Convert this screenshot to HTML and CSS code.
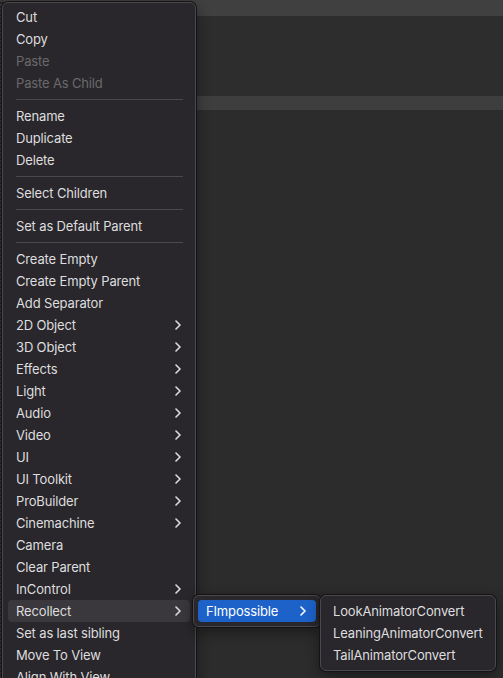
FILE: index.html
```html
<!DOCTYPE html>
<html>
<head>
<meta charset="utf-8">
<link rel="stylesheet" href="styles.css">
</head>
<body>
<div class="app">
  <div class="edge"></div>
  <div class="panel">
    <div class="bar-top"></div>
    <div class="area"></div>
    <div class="bar-mid"></div>
    <div class="area rest"></div>
  </div>
</div>

<div class="menu main">
  <div class="item">Cut</div>
  <div class="item">Copy</div>
  <div class="item disabled">Paste</div>
  <div class="item disabled">Paste As Child</div>
  <div class="sep"></div>
  <div class="item">Rename</div>
  <div class="item">Duplicate</div>
  <div class="item">Delete</div>
  <div class="sep"></div>
  <div class="item">Select Children</div>
  <div class="sep"></div>
  <div class="item">Set as Default Parent</div>
  <div class="sep"></div>
  <div class="item">Create Empty</div>
  <div class="item">Create Empty Parent</div>
  <div class="item">Add Separator</div>
  <div class="item sub">2D Object<svg class="chev" viewBox="0 0 6 10"><path d="M1 1 L5 5 L1 9"/></svg></div>
  <div class="item sub">3D Object<svg class="chev" viewBox="0 0 6 10"><path d="M1 1 L5 5 L1 9"/></svg></div>
  <div class="item sub">Effects<svg class="chev" viewBox="0 0 6 10"><path d="M1 1 L5 5 L1 9"/></svg></div>
  <div class="item sub">Light<svg class="chev" viewBox="0 0 6 10"><path d="M1 1 L5 5 L1 9"/></svg></div>
  <div class="item sub">Audio<svg class="chev" viewBox="0 0 6 10"><path d="M1 1 L5 5 L1 9"/></svg></div>
  <div class="item sub">Video<svg class="chev" viewBox="0 0 6 10"><path d="M1 1 L5 5 L1 9"/></svg></div>
  <div class="item sub">UI<svg class="chev" viewBox="0 0 6 10"><path d="M1 1 L5 5 L1 9"/></svg></div>
  <div class="item sub">UI Toolkit<svg class="chev" viewBox="0 0 6 10"><path d="M1 1 L5 5 L1 9"/></svg></div>
  <div class="item sub">ProBuilder<svg class="chev" viewBox="0 0 6 10"><path d="M1 1 L5 5 L1 9"/></svg></div>
  <div class="item sub">Cinemachine<svg class="chev" viewBox="0 0 6 10"><path d="M1 1 L5 5 L1 9"/></svg></div>
  <div class="item">Camera</div>
  <div class="item">Clear Parent</div>
  <div class="item sub">InControl<svg class="chev" viewBox="0 0 6 10"><path d="M1 1 L5 5 L1 9"/></svg></div>
  <div class="item sub open">Recollect<svg class="chev" viewBox="0 0 6 10"><path d="M1 1 L5 5 L1 9"/></svg></div>
  <div class="item">Set as last sibling</div>
  <div class="item">Move To View</div>
  <div class="item">Align With View</div>
</div>

<div class="menu sub1">
  <div class="item sub active">FImpossible<svg class="chev" viewBox="0 0 6 10"><path d="M1 1 L5 5 L1 9"/></svg></div>
</div>

<div class="menu sub2">
  <div class="item">LookAnimatorConvert</div>
  <div class="item">LeaningAnimatorConvert</div>
  <div class="item">TailAnimatorConvert</div>
</div>
</body>
</html>
```
FILE: styles.css
```css
* { box-sizing: border-box; }
html, body {
  margin: 0;
  padding: 0;
  width: 503px;
  height: 678px;
  overflow: hidden;
  background: #2c2c2c;
  font-family: "Inter", "Noto Sans", sans-serif;
}
.app {
  display: flex;
  height: 678px;
}
.edge {
  width: 4px;
  background: repeating-linear-gradient(to bottom, #3a3a3a 0 2px, #262626 2px 4px);
}
.panel {
  flex: 1;
  display: flex;
  flex-direction: column;
}
.bar-top {
  height: 16px;
  background: #404040;
}
.area {
  height: 80px;
  background: #2d2d2d;
}
.bar-mid {
  height: 14px;
  background: #3e3e3e;
}
.area.rest {
  flex: 1;
  background: #2c2c2c;
}

.menu {
  position: absolute;
  background: #29272b;
  border: 1px solid #4a484c;
  box-shadow: 0 0 0 1px #141414, 0 4px 14px rgba(0,0,0,0.45);
  border-radius: 6px;
  padding: 4px 5px;
  color: #dedddf;
  font-size: 13px;
  letter-spacing: -0.15px;
}
.main {
  left: 2px;
  top: 2px;
  width: 194px;
  padding-top: 3px;
}
.item {
  height: 22px;
  line-height: 22px;
  padding-left: 8px;
  padding-right: 9px;
  display: flex;
  align-items: center;
  justify-content: space-between;
  border-radius: 4px;
  white-space: nowrap;
}
.item.disabled {
  color: #6a696c;
}
.sep {
  height: 11px;
  display: flex;
  align-items: center;
  padding: 0 7px 0 8px;
}
.sep::before {
  content: "";
  flex: 1;
  height: 1px;
  background: #4a494c;
}
.chev {
  width: 6px;
  height: 10px;
  flex: none;
}
.chev path {
  fill: none;
  stroke: #dedddf;
  stroke-width: 1.6;
  stroke-linecap: round;
  stroke-linejoin: round;
}
.item.open {
  background: #3a383c;
}
.sub1 {
  left: 193px;
  top: 595px;
  width: 128px;
  padding: 4px 4px;
}
.sub1 .item {
  padding-right: 10px;
}
.item.active {
  background: #1d62c9;
  color: #ffffff;
}
.item.active .chev path { stroke: #ffffff; }
.sub2 {
  left: 320px;
  top: 595px;
  width: 176px;
  padding: 4px 4px;
}
.sub2 .item {
  padding-left: 8px;
}
```
